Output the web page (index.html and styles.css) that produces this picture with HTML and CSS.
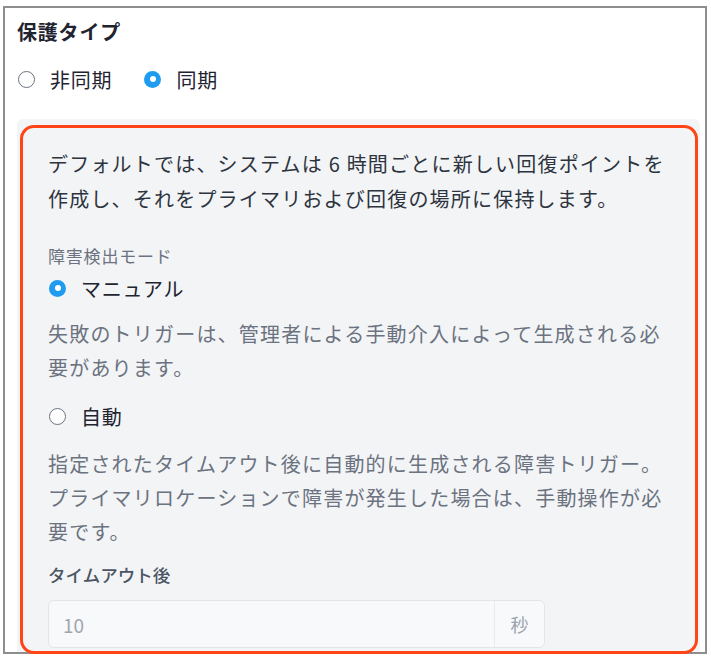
FILE: index.html
```html
<!DOCTYPE html>
<html lang="ja">
<head>
<meta charset="utf-8">
<title>保護タイプ</title>
<link rel="stylesheet" href="styles.css">
</head>
<body>
<div class="frame">
  <h2 class="title">保護タイプ</h2>
  <div class="radio-group">
    <label class="radio"><span class="dot"></span><span class="radio-text">非同期</span></label>
    <label class="radio"><span class="dot checked"></span><span class="radio-text">同期</span></label>
  </div>
  <div class="panel">
    <p class="lead">デフォルトでは、システムは 6 時間ごとに新しい回復ポイントを<br>作成し、それをプライマリおよび回復の場所に保持します。</p>
    <div class="field-label">障害検出モード</div>
    <label class="radio option"><span class="dot checked"></span><span class="radio-text">マニュアル</span></label>
    <p class="help">失敗のトリガーは、管理者による手動介入によって生成される必<br>要があります。</p>
    <label class="radio option"><span class="dot"></span><span class="radio-text">自動</span></label>
    <p class="help">指定されたタイムアウト後に自動的に生成される障害トリガー。<br>プライマリロケーションで障害が発生した場合は、手動操作が必<br>要です。</p>
    <div class="timeout-label">タイムアウト後</div>
    <div class="input-group">
      <div class="input">10</div>
      <div class="addon">秒</div>
    </div>
  </div>
</div>
<div class="highlight"></div>
</body>
</html>
```

FILE: styles.css
```css
html, body {
  margin: 0;
  padding: 0;
  background: #ffffff;
}
body {
  position: relative;
  height: 658px;
  overflow: hidden;
  font-family: "Noto Sans CJK JP", "Noto Sans", sans-serif;
  color: #1f2937;
}
.frame {
  box-sizing: border-box;
  margin: 6px 0 0 3px;
  width: 704px;
  height: 648px;
  border: 2px solid #8e8e8e;
  padding: 10px 5px 0 12px;
  overflow: hidden;
}
.title {
  margin: 0;
  font-size: 20px;
  line-height: 28px;
  font-weight: 700;
  letter-spacing: 0.8px;
  color: #1f2430;
}
.radio-group {
  display: flex;
  gap: 31px;
  margin-top: 19px;
}
.radio {
  display: flex;
  align-items: center;
  height: 28px;
}
.dot {
  box-sizing: border-box;
  width: 17px;
  height: 17px;
  border-radius: 50%;
  border: 1.5px solid #6b7280;
  background: #ffffff;
  margin-left: 1px;
  margin-right: 15px;
  position: relative;
  flex: none;
}
.dot.checked {
  border: none;
  background: #1f9cf0;
}
.dot.checked::after {
  content: "";
  position: absolute;
  left: 5.5px;
  top: 5.5px;
  width: 6px;
  height: 6px;
  border-radius: 50%;
  background: #ffffff;
}
.radio-text {
  font-size: 20px;
  letter-spacing: 0.8px;
  color: #1f2430;
}
.panel {
  margin-top: 26px;
  background: #f3f4f6;
  border-radius: 6px;
  padding: 27px 20px 30px 31px;
}
.lead, .help {
  margin: 0;
  font-size: 20px;
  letter-spacing: 1.2px;
  white-space: nowrap;
}
.lead {
  line-height: 35px;
  color: #2d3440;
}
.help {
  line-height: 34px;
  color: #6b7280;
  margin-top: 14px;
}
.field-label {
  margin-top: 28px;
  font-size: 17px;
  line-height: 24px;
  letter-spacing: 0.8px;
  color: #6b7280;
}
.option {
  height: 30px;
  margin-top: 5px;
}
.help + .option {
  margin-top: 16px;
}
.option + .help {
  margin-top: 14px;
}
.help + .option + .help {
  margin-top: 16px;
}
.timeout-label {
  margin-top: 14px;
  font-size: 17.5px;
  line-height: 24px;
  font-weight: 500;
  color: #4b5563;
}
.input-group {
  margin-top: 13px;
  display: flex;
  width: 497px;
  height: 48px;
  box-sizing: border-box;
  border: 1px solid #e3e5e9;
  border-radius: 6px;
  background: #f8f9fa;
}
.input {
  flex: 1;
  display: flex;
  align-items: center;
  padding-left: 14px;
  font-size: 19px;
  color: #a0a6ae;
}
.addon {
  width: 49px;
  display: flex;
  align-items: center;
  justify-content: center;
  border-left: 1px solid #e8eaed;
  font-size: 18px;
  color: #9ca3af;
}
.highlight {
  position: absolute;
  left: 20px;
  top: 125px;
  width: 678px;
  height: 529px;
  box-sizing: border-box;
  border: 3.5px solid #ff4516;
  border-radius: 14px;
  pointer-events: none;
}
```
